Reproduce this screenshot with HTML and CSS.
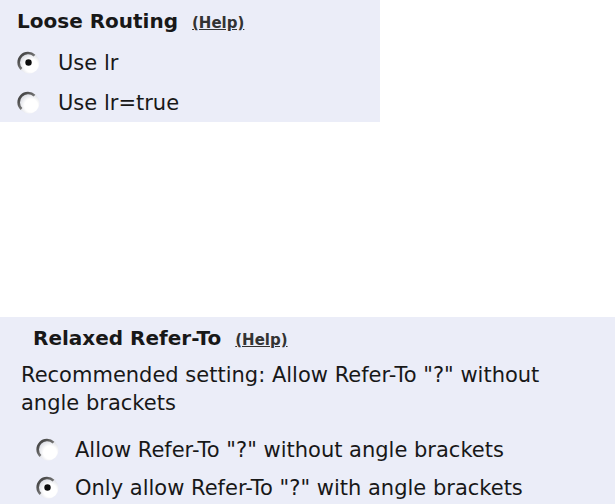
FILE: index.html
```html
<!DOCTYPE html>
<html lang="en">
<head>
    <meta charset="UTF-8">
    <title>SIP Settings</title>
    <link rel="stylesheet" href="styles.css">
</head>
<body>
    <section class="panel loose">
        <div class="panel-title">
            <span class="title-text">Loose Routing</span>
            <a class="help">(Help)</a>
        </div>
        <label class="radio-row first">
            <svg class="radio" viewBox="0 0 24 24"><use href="#radio-on"/></svg>
            <span>Use lr</span>
        </label>
        <label class="radio-row">
            <svg class="radio" viewBox="0 0 24 24"><use href="#radio-off"/></svg>
            <span>Use lr=true</span>
        </label>
    </section>

    <section class="panel relaxed">
        <div class="panel-title">
            <span class="title-text">Relaxed Refer-To</span>
            <a class="help">(Help)</a>
        </div>
        <p class="note">Recommended setting: Allow Refer-To "?" without angle brackets</p>
        <label class="radio-row first">
            <svg class="radio" viewBox="0 0 24 24"><use href="#radio-off"/></svg>
            <span>Allow Refer-To "?" without angle brackets</span>
        </label>
        <label class="radio-row">
            <svg class="radio" viewBox="0 0 24 24"><use href="#radio-on"/></svg>
            <span>Only allow Refer-To "?" with angle brackets</span>
        </label>
    </section>

    <svg class="defs" width="0" height="0">
        <defs>
            <radialGradient id="shade" cx="0.6" cy="0.62" r="0.62">
                <stop offset="0.5" stop-color="#ffffff"/>
                <stop offset="1" stop-color="#d6d8e0"/>
            </radialGradient>
            <linearGradient id="rim" x1="0" y1="0" x2="1" y2="1">
                <stop offset="0.2" stop-color="#4a4a4a"/>
                <stop offset="0.9" stop-color="#9a9a9a"/>
            </linearGradient>
            <g id="radio-off">
                <circle cx="12" cy="12" r="10.5" fill="url(#shade)"/>
                <path d="M4.5 18 A9.2 9.2 0 0 1 17.5 4.6" fill="none" stroke="url(#rim)" stroke-width="2.6"/>
            </g>
            <g id="radio-on">
                <use href="#radio-off"/>
                <circle cx="11.5" cy="11.5" r="3.2" fill="#0d0d0d"/>
            </g>
        </defs>
    </svg>
</body>
</html>
```

FILE: styles.css
```css
body {
    margin: 0;
    background-color: #fff;
    color: #181818;
    font-family: "DejaVu Sans", Verdana, sans-serif;
    font-size: 21px;
}

.panel {
    background-color: #ebedf8;
    display: flex;
    flex-direction: column;
    box-sizing: border-box;
}

.loose {
    width: 380px;
    height: 122px;
    padding: 9px 0 0 17px;
}

.relaxed {
    margin-top: 195px;
    height: 187px;
    padding: 9px 16px 0 21px;
}

.panel-title {
    line-height: 24px;
    display: flex;
    align-items: baseline;
    gap: 14px;
}

.relaxed .panel-title {
    padding-left: 12px;
}

.title-text {
    font-size: 20px;
    font-weight: bold;
}

.help {
    font-size: 15px;
    font-weight: bold;
    color: #333;
    text-decoration: underline;
    cursor: pointer;
}

.note {
    margin: 9px 0 0 0;
    line-height: 28px;
}

.radio-row {
    display: flex;
    align-items: center;
    line-height: 26px;
    height: 26px;
    margin-top: 14px;
}

.loose .radio-row.first {
    margin-top: 15px;
}

.relaxed .radio-row {
    padding-left: 15px;
    margin-top: 12px;
}

.relaxed .radio-row.first {
    margin-top: 20px;
}

.radio {
    width: 24px;
    height: 24px;
    margin-right: 17px;
}

.relaxed .radio {
    margin-right: 15px;
}

.defs {
    position: absolute;
}
```
